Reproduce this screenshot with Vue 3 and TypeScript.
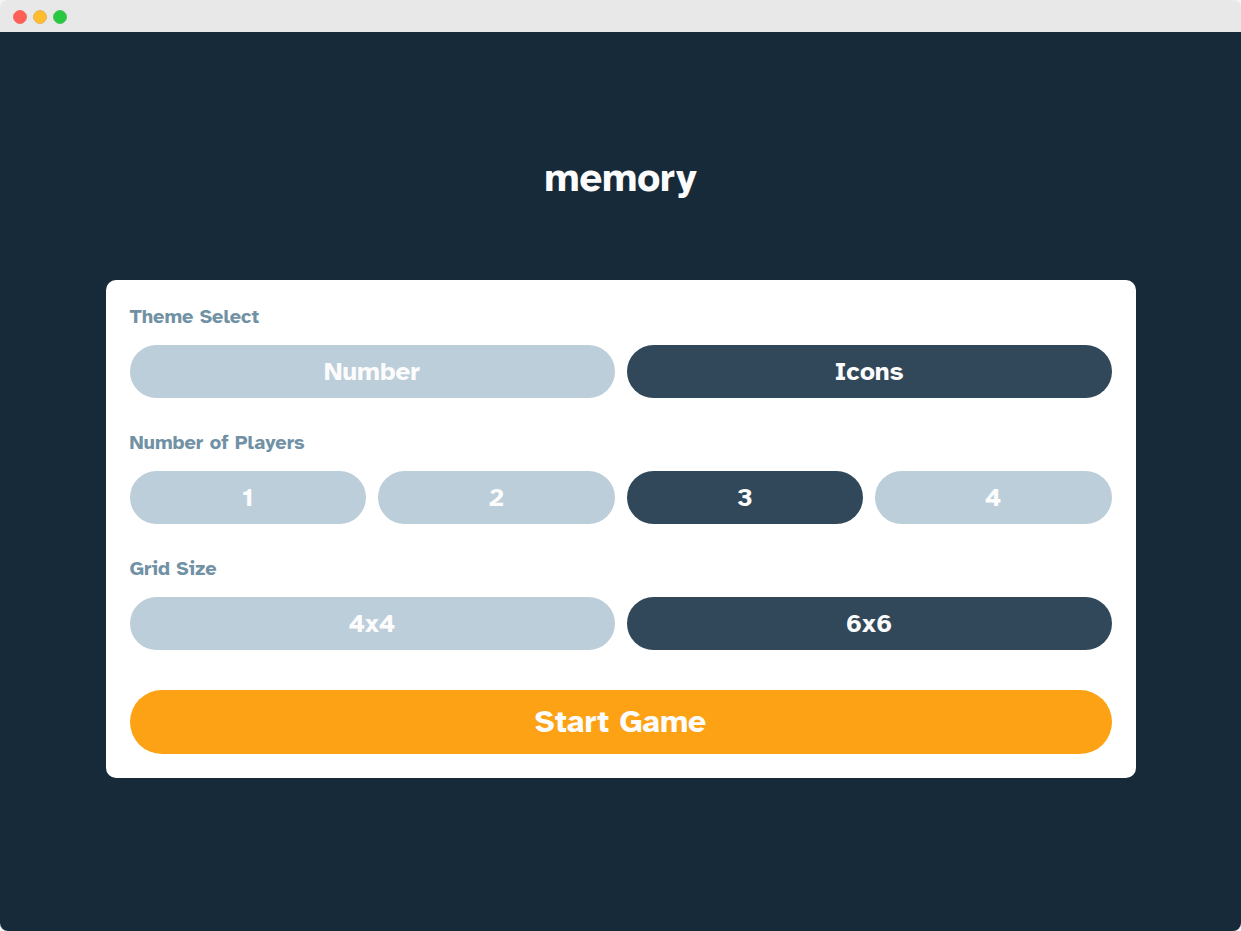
<script setup lang="ts">
import { reactive } from 'vue'

interface OptionGroup {
  id: string
  label: string
  options: string[]
  selected: string
}

const groups = reactive<OptionGroup[]>([
  { id: 'theme', label: 'Theme Select', options: ['Number', 'Icons'], selected: 'Icons' },
  { id: 'players', label: 'Number of Players', options: ['1', '2', '3', '4'], selected: '3' },
  { id: 'grid', label: 'Grid Size', options: ['4x4', '6x6'], selected: '6x6' },
])
</script>

<template>
  <div class="window">
    <header class="titlebar">
      <span class="light close"></span>
      <span class="light minimize"></span>
      <span class="light expand"></span>
    </header>
    <main class="screen">
      <h1 class="logo">memory</h1>
      <form class="card" @submit.prevent>
        <section
          v-for="group in groups"
          :key="group.id"
          class="group"
          role="group"
          :aria-labelledby="group.id"
        >
          <h2 :id="group.id" class="label">{{ group.label }}</h2>
          <div class="options">
            <button
              v-for="option in group.options"
              :key="option"
              type="button"
              class="option"
              :class="{ active: option === group.selected }"
              :aria-pressed="option === group.selected"
              @click="group.selected = option"
            >
              {{ option }}
            </button>
          </div>
        </section>
        <button type="submit" class="start">Start Game</button>
      </form>
    </main>
  </div>
</template>

<style>
body {
  margin: 0;
  background: #f4f4f4;
}
</style>

<style scoped>
.window {
  box-sizing: border-box;
  display: flex;
  flex-direction: column;
  min-height: 100vh;
  font-family: "Atkinson Hyperlegible", Inter, "Liberation Sans", sans-serif;
}

.titlebar {
  display: flex;
  align-items: center;
  gap: 6px;
  height: 32px;
  padding: 2px 13px 0;
  box-sizing: border-box;
  border-radius: 8px 8px 0 0;
  background: #e8e8e8;
}

.light {
  box-sizing: border-box;
  width: 14px;
  height: 14px;
  border: 1px solid;
  border-radius: 50%;
}

.close {
  background: #ff5f57;
  border-color: #f26d66;
}

.minimize {
  background: #ffbd2e;
  border-color: #e9b25a;
}

.expand {
  background: #28c940;
  border-color: #4cc05c;
}

.screen {
  flex: 1;
  display: flex;
  flex-direction: column;
  align-items: center;
  justify-content: center;
  gap: 78px;
  padding: 0 24px 32px;
  border-radius: 0 0 8px 8px;
  background: #172a39;
}

.logo {
  margin: 0;
  color: #fcfcfc;
  font-size: 40px;
  line-height: 48px;
  font-weight: 700;
}

.card {
  box-sizing: border-box;
  width: 100%;
  max-width: 1030px;
  padding: 24px;
  border-radius: 10px;
  background: #fff;
}

.group {
  margin-bottom: 32px;
}

.label {
  margin: 0 0 16px;
  color: #7191a5;
  font-size: 20px;
  line-height: 25px;
  font-weight: 700;
}

.options {
  display: grid;
  grid-auto-flow: column;
  grid-auto-columns: 1fr;
  gap: 12px;
}

.option,
.start {
  border: 0;
  padding: 0;
  color: #fcfcfc;
  font-family: inherit;
  font-weight: 700;
  cursor: pointer;
}

.option {
  height: 53px;
  border-radius: 27px;
  background: #bcceda;
  font-size: 26px;
}

.option.active {
  background: #304859;
}

.start {
  width: 100%;
  height: 64px;
  margin-top: 8px;
  border-radius: 32px;
  background: #fda214;
  font-size: 32px;
}
</style>
